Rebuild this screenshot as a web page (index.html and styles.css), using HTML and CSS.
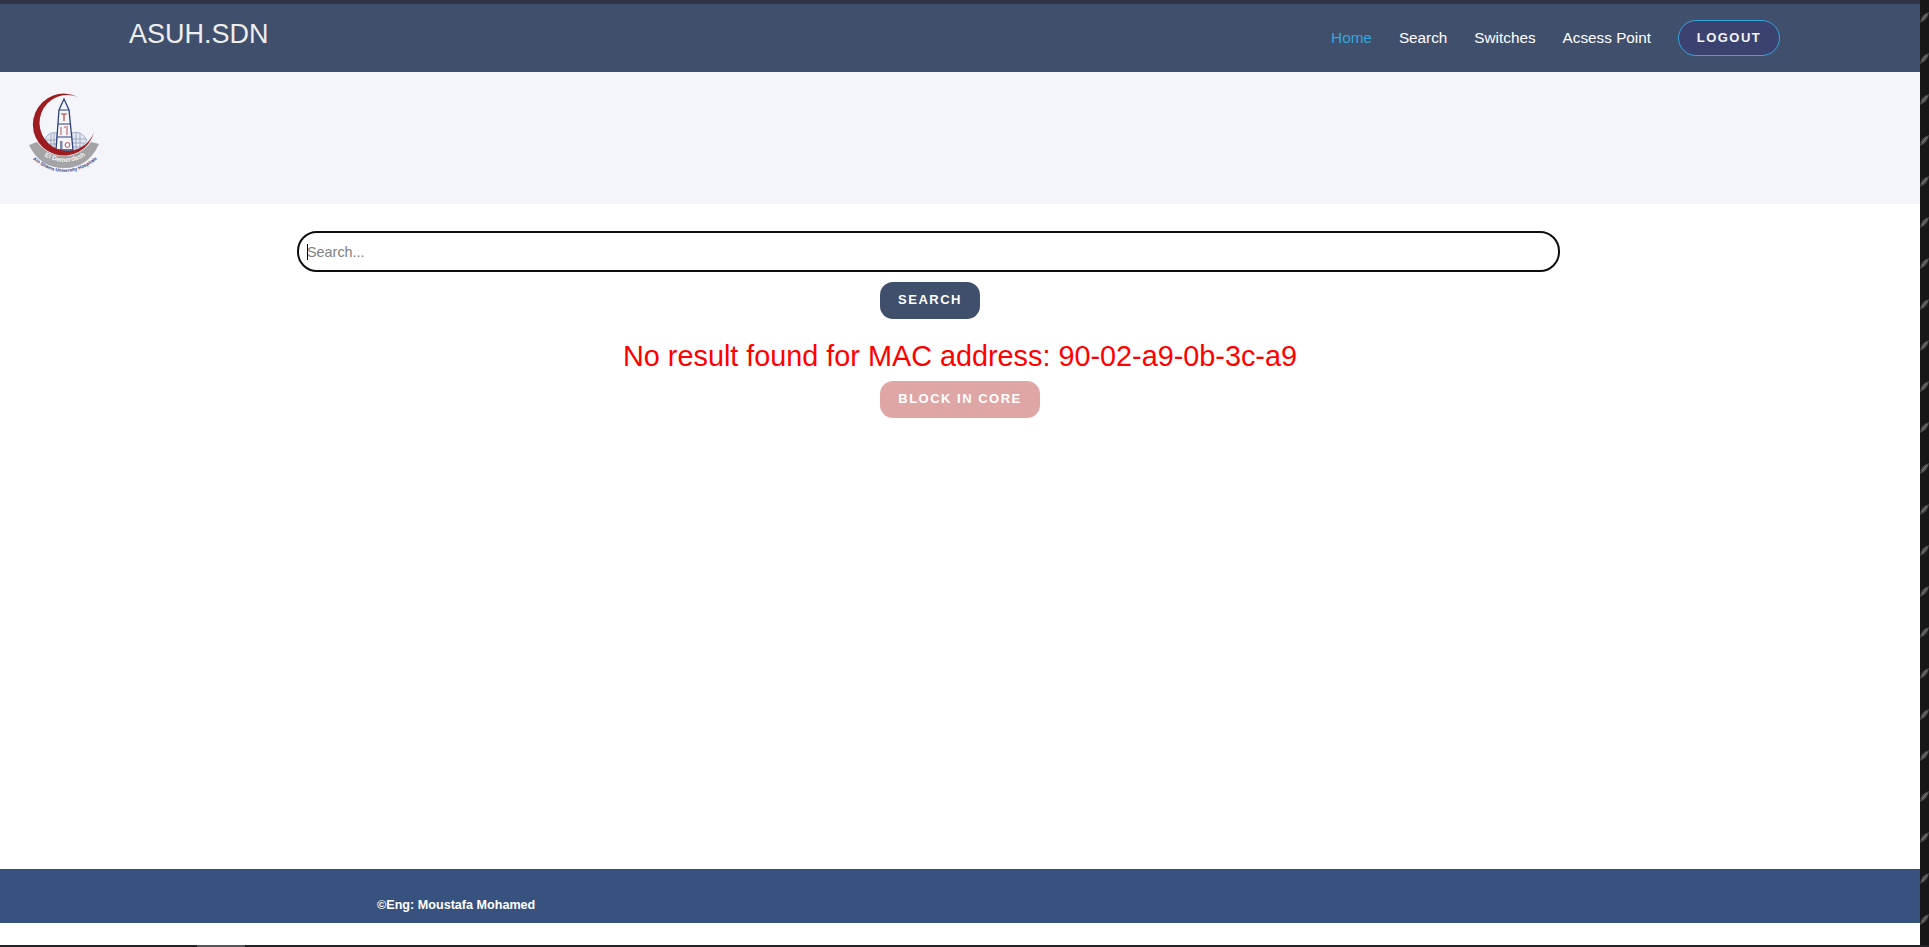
FILE: index.html
```html
<!DOCTYPE html>
<html lang="en">
<head>
<meta charset="utf-8">
<title>ASUH.SDN</title>
<link rel="stylesheet" href="styles.css">
</head>
<body>
<div class="desktop">
  <div class="window-row">
    <div class="app">
      <header class="topbar">
        <a class="brand" href="#">ASUH.SDN</a>
        <nav class="nav">
          <a class="nav-link active" href="#">Home</a>
          <a class="nav-link" href="#">Search</a>
          <a class="nav-link" href="#">Switches</a>
          <a class="nav-link" href="#">Acsess Point</a>
          <a class="logout" href="#">LOGOUT</a>
        </nav>
      </header>
      <section class="band">
        <svg class="logo" viewBox="0 0 74 82" width="74" height="82" aria-label="El Demerdash logo">
          <defs>
            <path id="arc-inner" d="M7 56 Q36 82 67 56"/>
            <path id="arc-outer" d="M0 62 Q36 96 74 62"/>
          </defs>
          <path d="M1 52 L9 49 Q20 63 36 63 Q52 63 63 49 L71 51 Q60 75 36 75 Q12 75 1 52 Z" fill="#a4a4a6"/>
          <g fill="#e4e8f1" stroke="#8592b4" stroke-width="0.7">
            <path d="M17 46 Q21 38 29 40 L29 58 L22 56 Z"/>
            <path d="M44 40 Q53 37 59 47 L53 55 L44 58 Z"/>
            <path d="M18 47 L29 47 M20 51 L29 51 M23 55 L29 55 M23 41 L23 56 M26 40 L26 57" fill="none"/>
            <path d="M44 46 L58 46 M44 50 L56 50 M44 54 L53 54 M48 39 L48 57 M52 40 L52 55" fill="none"/>
          </g>
          <path d="M36 6 L31 17 L28 57 L45 57 L41 17 Z" fill="#f4f6fb" stroke="#2e4178" stroke-width="1.300"/>
          <path d="M31 17 L41 17 M30 31 L42 31 M29 44 L44 44" stroke="#2e4178" stroke-width="1" fill="none"/>
          <path d="M33 21 L39 21 M36 21 L36 28" stroke="#b0413e" stroke-width="1.200" fill="none"/>
          <path d="M33 34 L33 42 M36 34 L40 34 M39 35 L39 42" stroke="#b0413e" stroke-width="0.900" fill="none"/>
          <rect x="32" y="48" width="2.500" height="8" fill="#7c87a6"/>
          <circle cx="39.500" cy="52" r="2.400" fill="none" stroke="#b0413e" stroke-width="0.900"/>
          <path d="M50 4 A31 31 0 1 0 66 39 A28 28 0 1 1 50 4 Z" fill="#9c1c20"/>
          <text class="logo-arc-a"><textPath href="#arc-inner" startOffset="50%" text-anchor="middle">El Demerdash</textPath></text>
          <text class="logo-arc-b"><textPath href="#arc-outer" startOffset="50%" text-anchor="middle">Ain Shams University Hospitals</textPath></text>
        </svg>
      </section>
      <main class="content">
        <form class="search-form">
          <div class="search-field">
            <input class="search-input" type="text" placeholder="Search...">
            <span class="caret"></span>
          </div>
          <button class="btn btn-search" type="button">SEARCH</button>
        </form>
        <h2 class="message">No result found for MAC address: 90-02-a9-0b-3c-a9</h2>
        <div class="block-row"><button class="btn btn-block" type="button">BLOCK IN CORE</button></div>
      </main>
      <footer class="footer"><span class="credit">©Eng: Moustafa Mohamed</span></footer>
      <div class="after-footer"></div>
    </div>
    <svg class="texture" width="9" height="945" aria-hidden="true">
      <defs>
        <pattern id="leaf" width="9" height="41" patternUnits="userSpaceOnUse">
          <rect width="9" height="41" fill="#171717"/>
          <path d="M0 23 Q1 14 9 12 Q8 20 0 23 Z" fill="#4a4a4a"/>
          <path d="M2 20 L7 14" stroke="#8a8a8a" stroke-width="0.800"/>
        </pattern>
      </defs>
      <rect width="9" height="945" fill="url(#leaf)"/>
    </svg>
  </div>
  <div class="taskbar"><span class="taskbar-item"></span></div>
</div>
</body>
</html>
```

FILE: styles.css
```css
* { box-sizing: border-box; }
html, body { margin: 0; height: 100%; overflow: hidden; background: #fff; }
body { font-family: "Liberation Sans", Arial, sans-serif; }
a { text-decoration: none; }

.desktop { width: 1929px; height: 947px; display: flex; flex-direction: column; }
.window-row { display: flex; height: 945px; }
.app { width: 1920px; height: 945px; display: flex; flex-direction: column; background: #fff; }
.texture { display: block; flex: none; }
.taskbar { height: 2px; background: #232326; padding-left: 197px; }
.taskbar-item { display: block; width: 48px; height: 2px; background: #55555a; }

.topbar {
  height: 72px;
  flex: none;
  background: #3f4f6c;
  border-top: 4px solid #32344a;
  display: flex;
  justify-content: space-between;
  padding: 0 140px 0 129px;
}
.brand { color: #eeeeee; font-size: 27px; line-height: 32px; padding-top: 14px; }
.nav { display: flex; align-items: flex-start; padding-top: 16px; }
.nav-link { color: #fff; font-size: 15.300px; line-height: 36px; margin-right: 27px; }
.nav-link.active { color: #37a5dd; }
.logout {
  width: 102px;
  height: 36px;
  border: 1px solid #37a5dd;
  border-radius: 18px;
  background: #3c4270;
  color: #f4f4f6;
  font-size: 13px;
  font-weight: 700;
  letter-spacing: 1.500px;
  line-height: 33px;
  text-align: center;
}

.band { height: 132px; flex: none; background: #f3f5fa; padding: 21px 0 0 28px; }
.logo { display: block; }
.logo-arc-a { font-family: "Liberation Sans", sans-serif; font-size: 6.500px; font-weight: 700; fill: #f4f4f4; }
.logo-arc-b { font-family: "Liberation Sans", sans-serif; font-size: 4.700px; font-weight: 700; fill: #2e4178; }

.content { flex: 1; }
.search-form { padding: 27px 0 0 297px; }
.search-field { position: relative; width: 1263px; }
.search-input {
  display: block;
  width: 100%;
  height: 41px;
  border: 2px solid #0e0e0e;
  border-radius: 20px;
  padding: 0 8px;
  font-family: "Liberation Sans", sans-serif;
  font-size: 14.400px;
  background: #fff;
  outline: none;
}
.search-input::placeholder { color: #808080; opacity: 1; }
.caret { position: absolute; left: 10px; top: 13px; width: 1px; height: 16px; background: #000; }

.btn {
  display: block;
  height: 37px;
  border: 0;
  border-radius: 13px;
  color: #fff;
  font-family: "Liberation Sans", sans-serif;
  font-size: 13px;
  font-weight: 700;
  letter-spacing: 1.500px;
  padding: 0 0 2px;
}
.btn-search { width: 100px; margin: 10px 0 0 583px; background: #3f4f6c; }
.btn-block { width: 160px; background: #dfa6a6; }
.message {
  margin: 0;
  padding-top: 20px;
  color: #ff0000;
  font-size: 28.800px;
  font-weight: 400;
  line-height: 34px;
  text-align: center;
}
.block-row { padding: 8px 0 0 880px; }

.footer {
  height: 54px;
  flex: none;
  background: #37527e;
  padding: 28px 0 0 377px;
}
.credit { display: block; color: #fff; font-size: 12.600px; font-weight: 700; line-height: 16px; }
.after-footer { height: 22px; flex: none; background: #fff; }
```
